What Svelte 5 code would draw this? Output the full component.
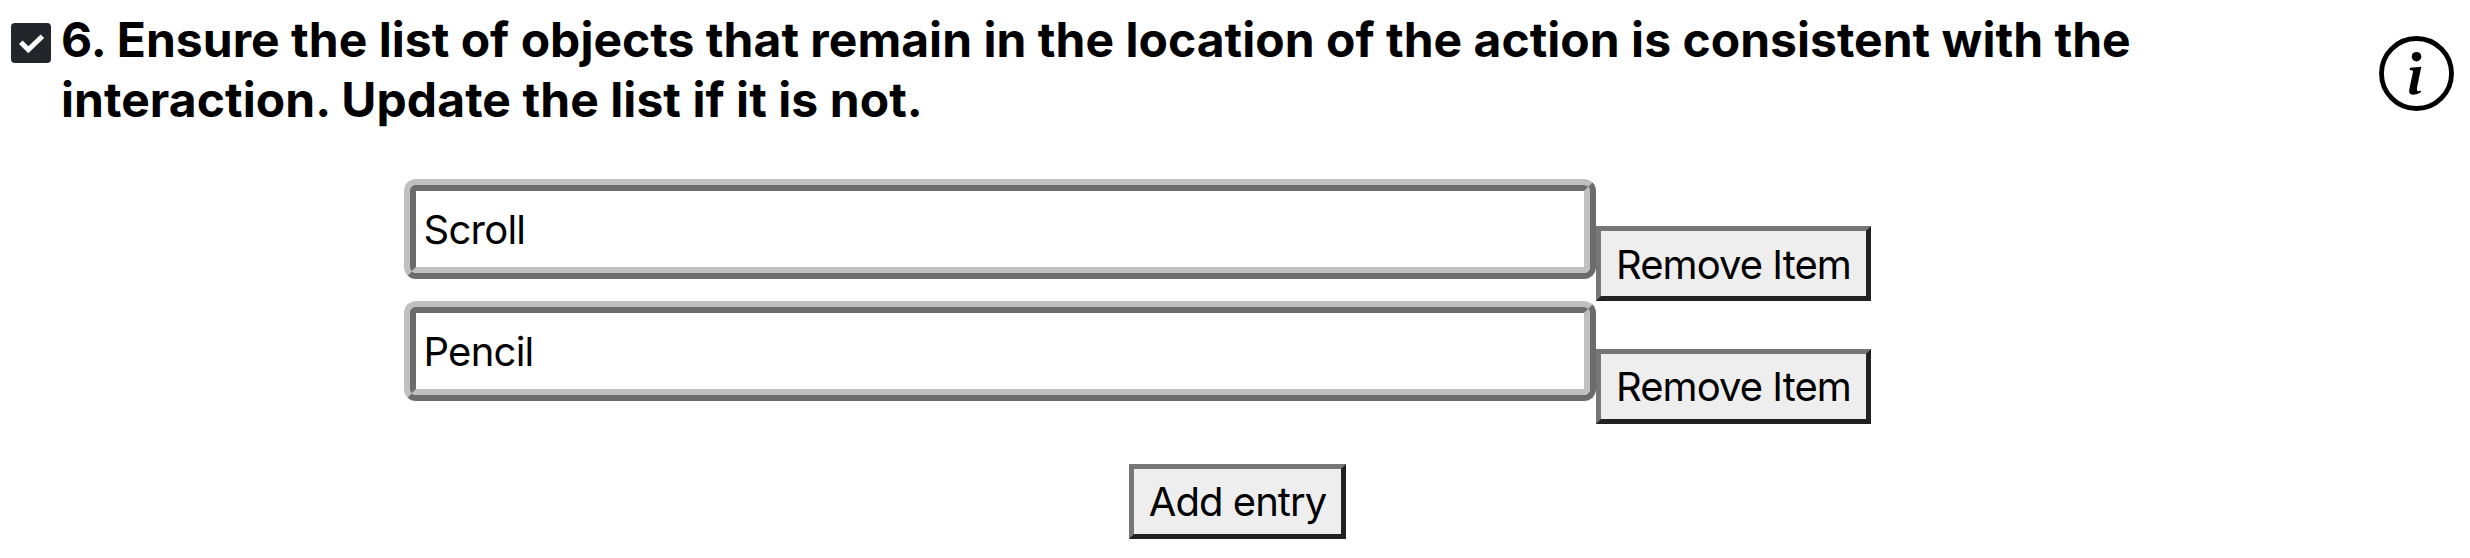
<script>
  let items = $state(['Scroll', 'Pencil']);
  const heading = [
    '6. Ensure the list of objects that remain in the location of the action is consistent with the',
    'interaction. Update the list if it is not.',
  ];
</script>

<main>
  <header>
    <svg class="check" viewBox="0 0 40 40" role="img" aria-label="Complete">
      <rect width="40" height="40" rx="4" fill="#22262b" />
      <path d="M9.8 19.3 17.3 26.8 31.4 13.2" fill="none" stroke="#fff" stroke-width="5" />
    </svg>
    <h1>
      {#each heading as line, i}
        <span class:second={i === 1}>{line}</span>
      {/each}
    </h1>
    <svg class="info" viewBox="0 0 75 75" role="img" aria-label="Information">
      <circle cx="37.5" cy="37.5" r="35" fill="none" stroke="#000" stroke-width="4.8" />
      <circle cx="37.5" cy="20.7" r="4.8" />
      <path d="M31 31.8 42.3 30.7 38 51.5Q37.5 55.2 39.3 55.2 40.6 55.2 42 54.4L41.6 56.6Q38.5 58.7 34.5 58.7 29.3 58.7 30.3 53.2L34 35.7Q34.4 34.1 30.6 33.9Z" />
    </svg>
  </header>

  <ul>
    {#each items as item, i}
      <li>
        <div class="field"><div class="inner"><span>{item}</span></div></div>
        <button class="remove" onclick={() => items.splice(i, 1)}><span>Remove Item</span></button>
      </li>
    {/each}
  </ul>

  <footer>
    <button class="add" onclick={() => items.push('')}><span>Add entry</span></button>
  </footer>
</main>

<style>
  :global(body) { background: #fff; }
  main {
    width: 2470px;
    height: 558px;
    overflow: hidden;
    color: #000;
    font-family: Inter, "Liberation Sans", sans-serif;
  }
  header {
    display: flex;
    align-items: flex-start;
    height: 179px;
    padding: 0 16px 0 11px;
    box-sizing: border-box;
  }
  .check { width: 40px; height: 40px; margin-top: 23px; flex: none; }
  .info { width: 75px; height: 75px; margin-top: 36px; margin-left: auto; flex: none; }
  h1 {
    margin: 9.5px 0 0 10px;
    font-size: 48px;
    line-height: 60px;
    font-weight: 700;
    letter-spacing: 0.025px;
    white-space: nowrap;
  }
  h1 span { display: block; width: max-content; }
  h1 .second { letter-spacing: 0.07px; }
  ul {
    display: flex;
    flex-direction: column;
    margin: 0;
    padding: 0 0 0 404px;
    list-style: none;
  }
  li { display: flex; height: 122px; }
  .field {
    width: 1192px;
    height: 100px;
    box-sizing: border-box;
    border: 6px solid;
    border-color: #c0c0c0 #6c6c6c #6c6c6c #c0c0c0;
    border-radius: 12px;
    background: #fff;
  }
  .inner {
    display: flex;
    align-items: center;
    height: 100%;
    box-sizing: border-box;
    padding-left: 7.5px;
    border: 6px solid;
    border-color: #6c6c6c #c0c0c0 #c0c0c0 #6c6c6c;
    border-radius: 6px;
    font-size: 40px;
    letter-spacing: -0.75px;
  }
  button {
    display: flex;
    align-items: center;
    justify-content: center;
    height: 75px;
    padding: 0;
    box-sizing: border-box;
    border: 5px solid;
    border-color: #767676 #212121 #212121 #767676;
    background: #eee;
    color: #000;
    font: 40px Inter, "Liberation Sans", sans-serif;
    letter-spacing: -0.95px;
    white-space: nowrap;
  }
  .remove { width: 275px; margin-top: 47px; }
  li:first-child .remove { padding-top: 2px; }
  li + li .remove { margin-top: 48px; }
  .add { width: 217px; }
  footer { padding: 41px 0 0 1129px; }
</style>
